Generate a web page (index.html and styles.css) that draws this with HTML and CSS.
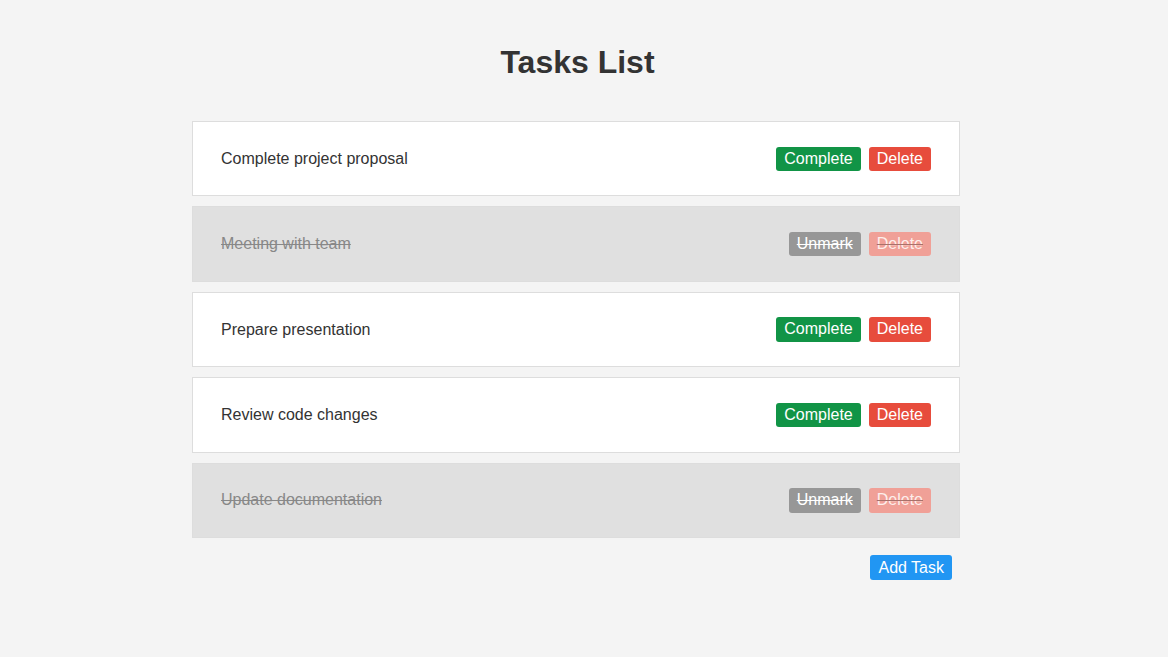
FILE: index.html
```html
<!DOCTYPE html>
<html lang="en">
<head>
<meta charset="utf-8">
<title>Tasks List</title>
<link rel="stylesheet" href="styles.css">
</head>
<body>
<div class="app">
  <h1 class="title">Tasks List</h1>
  <ul class="tasks">
    <li class="task">
      <span class="task-text">Complete project proposal</span>
      <div class="actions"><button class="btn btn-complete">Complete</button><button class="btn btn-delete">Delete</button></div>
    </li>
    <li class="task done">
      <span class="task-text">Meeting with team</span>
      <div class="actions"><button class="btn btn-unmark">Unmark</button><button class="btn btn-delete">Delete</button></div>
    </li>
    <li class="task">
      <span class="task-text">Prepare presentation</span>
      <div class="actions"><button class="btn btn-complete">Complete</button><button class="btn btn-delete">Delete</button></div>
    </li>
    <li class="task">
      <span class="task-text">Review code changes</span>
      <div class="actions"><button class="btn btn-complete">Complete</button><button class="btn btn-delete">Delete</button></div>
    </li>
    <li class="task done">
      <span class="task-text">Update documentation</span>
      <div class="actions"><button class="btn btn-unmark">Unmark</button><button class="btn btn-delete">Delete</button></div>
    </li>
  </ul>
  <div class="footer"><button class="btn btn-add">Add Task</button></div>
</div>
</body>
</html>
```

FILE: styles.css
```css
* { box-sizing: border-box; }
html, body { margin: 0; padding: 0; }
body {
  background: #f4f4f4;
  font-family: "Liberation Sans", Arial, sans-serif;
  color: #333;
  padding-right: 16px;
}
.app {
  width: 768px;
  margin: 0 auto;
  padding-top: 44px;
}
.title {
  margin: 0 0 40px;
  padding-left: 3px;
  text-align: center;
  font-size: 32px;
  font-weight: bold;
  line-height: 37px;
  color: #333;
}
.tasks {
  list-style: none;
  margin: 0;
  padding: 0;
  display: flex;
  flex-direction: column;
  gap: 10px;
}
.task {
  display: flex;
  align-items: center;
  justify-content: space-between;
  background: #fff;
  border: 1px solid #ddd;
  padding: 24.5px 28px;
  font-size: 16px;
}
.task-text { color: #333; }
.task.done { background: #e0e0e0; }
.task.done .task-text { color: #888; text-decoration: line-through; }
.actions { display: flex; gap: 8px; }
.btn {
  font-family: "Liberation Sans", Arial, sans-serif;
  font-size: 16px;
  line-height: 18.4px;
  border: none;
  border-radius: 3px;
  padding: 3px 8px;
  color: #fff;
  cursor: pointer;
}
.btn-complete { background: #119446; }
.btn-delete { background: #e74c3c; }
.btn-unmark { background: #979797; text-decoration: line-through; }
.task.done .btn-delete {
  background: #f0a097;
  color: #fdeeec;
  text-decoration: line-through;
  text-decoration-color: #a8716b;
}
.footer {
  display: flex;
  justify-content: flex-end;
  padding: 17px 8px 0 0;
}
.btn-add {
  background: #2196f3;
  border-radius: 3px;
  padding: 3px 8px;
  line-height: 19px;
}
```
